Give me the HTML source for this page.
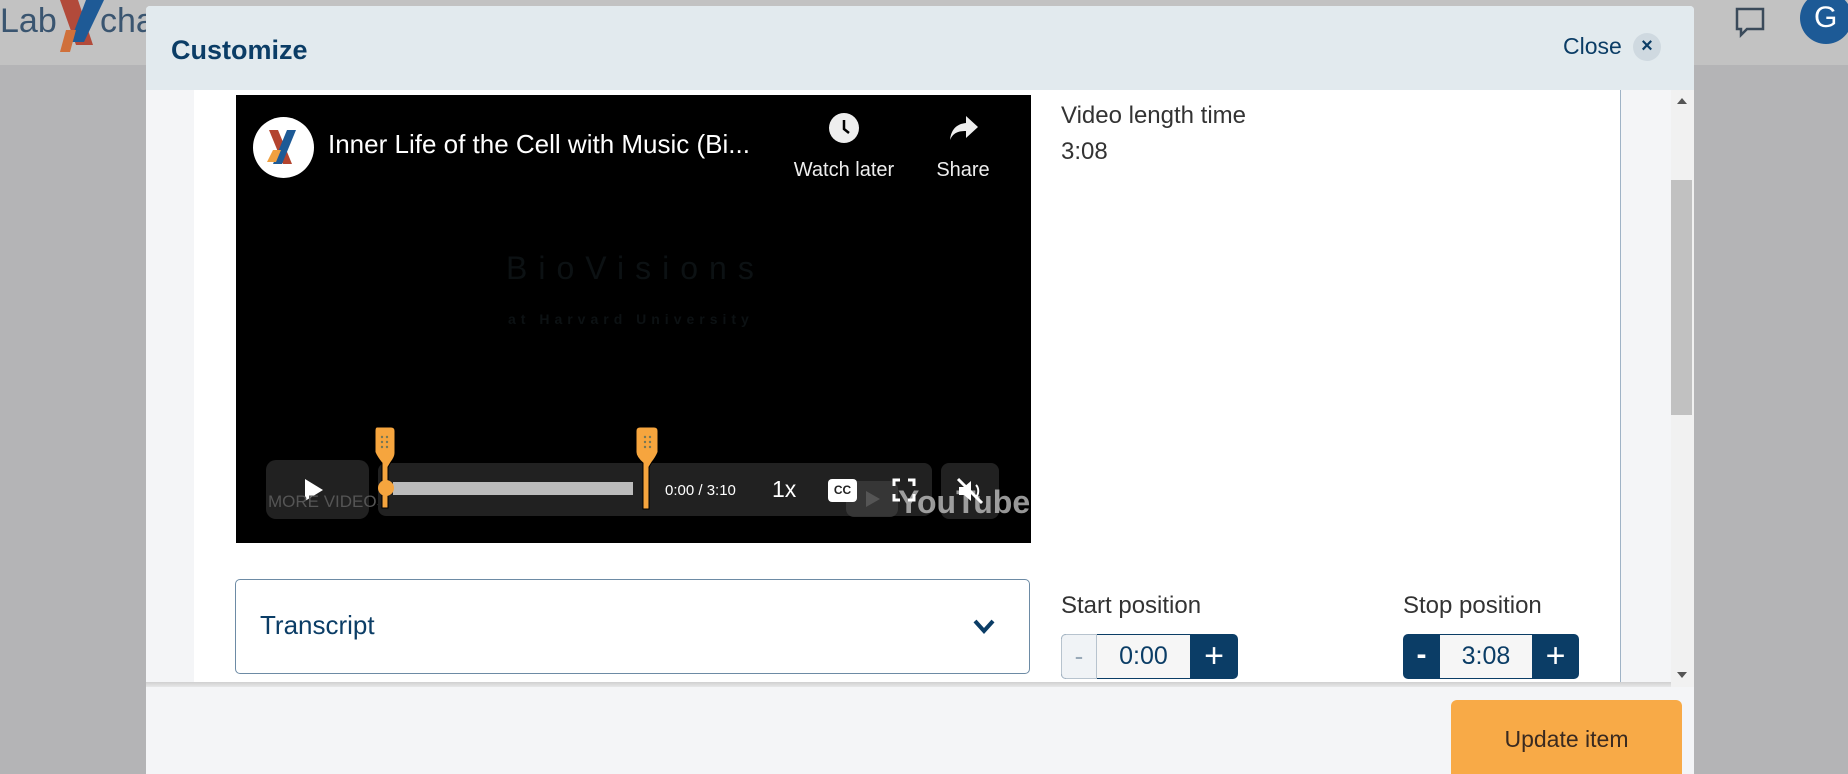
<!DOCTYPE html>
<html><head><meta charset="utf-8"><style>
*{margin:0;padding:0;box-sizing:border-box}
body{width:1848px;height:774px;overflow:hidden;background:#b4b4b6;font-family:"Liberation Sans",sans-serif;position:relative}
.a{position:absolute}
.n{font-family:"Liberation Sans Narrow","Liberation Sans",sans-serif}
</style></head><body>
<div class="a" style="left:0;top:0;width:1848px;height:65px;background:#c2c2c2"></div>
<div class="a n" style="left:0;top:2px;font-size:34px;color:#3a5570">Lab</div>
<div class="a n" style="left:100px;top:2px;font-size:34px;color:#3a5570">cha</div>
<svg class="a" style="left:48px;top:0" width="70" height="55"><path d="M12 0 L30 0 L45 45 L28 45Z" fill="#b24a3a"/><path d="M38 0 L56 0 L36 42 L22 42Z" fill="#1e5a96"/><path d="M18 30 L28 30 L22 52 L12 52Z" fill="#d0703a"/></svg>
<div class="a" style="left:1800px;top:-8px;width:52px;height:52px;border-radius:50%;background:#1d5a96;color:#fff;font-size:30px;line-height:52px;padding-left:14px">G</div>
<svg class="a" style="left:1733px;top:6px" width="34" height="34"><path d="M4 3h26v20H14l-6 6v-6H4z" fill="none" stroke="#3a4a5a" stroke-width="2.5"/></svg>

<div class="a" style="left:146px;top:6px;width:1548px;height:768px;background:#f4f5f7;border-radius:4px 4px 0 0;overflow:hidden">
 <div class="a" style="left:0;top:0;width:1548px;height:84px;background:#e2eaee"></div>
 <div class="a n" style="left:25px;top:29px;font-size:27px;font-weight:bold;color:#0b3d66">Customize</div>
 <div class="a n" style="left:1417px;top:27px;font-size:23px;color:#0b3d66">Close</div>
 <div class="a" style="left:1487px;top:27px;width:28px;height:28px;border-radius:50%;background:#cfd9e0;color:#0b3d66;font-size:20px;font-weight:bold;text-align:center;line-height:27px">×</div>
 <div class="a" style="left:48px;top:84px;width:1427px;height:597px;background:#fff;border-right:1px solid #9fb3c6"></div>
 <div class="a" style="left:1525px;top:84px;width:23px;height:597px;background:#f1f1f1"></div>
 <div class="a" style="left:1525px;top:174px;width:21px;height:235px;background:#c1c1c1"></div>
 <div class="a" style="left:1531px;top:92px;border-left:5px solid transparent;border-right:5px solid transparent;border-bottom:6px solid #555"></div>
 <div class="a" style="left:1531px;top:666px;border-left:5px solid transparent;border-right:5px solid transparent;border-top:6px solid #555"></div>
 <div class="a" style="left:0;top:676px;width:1525px;height:8px;background:linear-gradient(#d0d0d0,#f4f5f7)"></div>
 <div class="a" style="left:0;top:681px;width:1548px;height:90px;background:#f4f5f7"></div>
 <div class="a n" style="left:1305px;top:694px;width:231px;height:80px;background:#f8aa47;border-radius:6px;font-size:23px;color:#3a2a20;text-align:center;line-height:78px">Update item</div>

 <div class="a n" style="left:915px;top:92px;font-size:24px;color:#333;line-height:36px">Video length time<br>3:08</div>
 <div class="a n" style="left:915px;top:586px;font-size:24px;color:#333">Start position</div>
 <div class="a n" style="left:1257px;top:586px;font-size:24px;color:#333">Stop position</div>
 <div class="a" style="left:915px;top:628px;width:177px;height:45px;border-radius:5px;background:#0b3d66;overflow:hidden">
  <div class="a" style="left:0;top:0;width:36px;height:45px;background:#f0f3f6;border:1px solid #b7c3ce;border-radius:5px 0 0 5px;color:#98a9b8;font-size:26px;text-align:center;line-height:42px">-</div>
  <div class="a n" style="left:36px;top:1px;width:93px;height:43px;background:#f6f6f6;color:#0b3d66;font-size:25px;text-align:center;line-height:43px">0:00</div>
  <div class="a" style="left:129px;top:0;width:48px;height:45px;color:#fff;font-size:34px;text-align:center;line-height:44px">+</div>
 </div>
 <div class="a" style="left:1257px;top:628px;width:176px;height:45px;border-radius:5px;background:#0b3d66;overflow:hidden">
  <div class="a" style="left:0;top:0;width:37px;height:45px;color:#fff;font-size:30px;font-weight:bold;text-align:center;line-height:42px">-</div>
  <div class="a n" style="left:37px;top:1px;width:92px;height:43px;background:#f6f6f6;color:#0b3d66;font-size:25px;text-align:center;line-height:43px">3:08</div>
  <div class="a" style="left:129px;top:0;width:47px;height:45px;color:#fff;font-size:34px;text-align:center;line-height:44px">+</div>
 </div>

 <div class="a" style="left:89px;top:573px;width:795px;height:95px;border:1px solid #6d8ba5;border-radius:5px;background:#fff"></div>
 <div class="a n" style="left:114px;top:604px;font-size:26px;color:#0b3d66">Transcript</div>
 <svg class="a" style="left:826px;top:612px" width="24" height="18"><path d="M3 3 L12 13 L21 3" fill="none" stroke="#0b3d66" stroke-width="4"/></svg>

 <div class="a" style="left:90px;top:89px;width:795px;height:448px;background:#000;overflow:hidden">
  <div class="a" style="left:17px;top:22px;width:61px;height:61px;border-radius:50%;background:#fff"></div>
  <svg class="a" style="left:27px;top:35px" width="40" height="36"><path d="M6 0h9l14 34h-9z" fill="#b3442f"/><path d="M24 0h9L19 34h-9z" fill="#1d5a96"/><path d="M10 20h8l-5 12H4z" fill="#f0a040"/></svg>
  <div class="a n" style="left:92px;top:34px;font-size:26px;color:#fff;white-space:nowrap">Inner Life of the Cell with Music (Bi...</div>
  <div class="a" style="left:593px;top:18px;width:30px;height:30px;border-radius:50%;background:#eee"></div>
  <svg class="a" style="left:593px;top:18px" width="30" height="30"><path d="M15 7v9l5 4" fill="none" stroke="#000" stroke-width="2.5"/></svg>
  <div class="a n" style="left:550px;top:64px;width:116px;text-align:center;font-size:20px;color:#eee">Watch later</div>
  <svg class="a" style="left:712px;top:19px" width="32" height="30"><path d="M18 2 L30 13 L18 24 V17 C10 17 5 19 2 26 C3 16 8 10 18 9Z" fill="#eee"/></svg>
  <div class="a n" style="left:684px;top:64px;width:86px;text-align:center;font-size:20px;color:#eee">Share</div>
  <div class="a" style="left:270px;top:155px;font-size:32px;letter-spacing:11px;color:#0c1113">BioVisions</div>
  <div class="a" style="left:272px;top:216px;font-size:14px;letter-spacing:5px;color:#0c1113;font-weight:bold">at Harvard University</div>
  <div class="a" style="left:30px;top:365px;width:103px;height:59px;border-radius:10px;background:#212121"></div>
  <svg class="a" style="left:66px;top:382px" width="24" height="26"><path d="M3 2 L21 13 L3 24Z" fill="#fff"/></svg>
  <div class="a n" style="left:32px;top:397px;font-size:17px;color:#555;white-space:nowrap">MORE VIDEOS</div>
  <div class="a" style="left:142px;top:368px;width:554px;height:53px;border-radius:8px;background:#212121"></div>
  <div class="a" style="left:157px;top:387px;width:240px;height:13px;background:#bbb"></div>
  <div class="a" style="left:705px;top:368px;width:58px;height:56px;border-radius:8px;background:#212121"></div>
  <div class="a" style="left:610px;top:386px;width:52px;height:36px;border-radius:8px;background:rgba(60,60,60,.8)"></div>
  <svg class="a" style="left:628px;top:394px" width="18" height="20"><path d="M2 2 L16 10 L2 18Z" fill="#555"/></svg>
  <div class="a n" style="left:662px;top:389px;font-size:32px;font-weight:bold;color:rgba(200,200,200,.75);white-space:nowrap">YouTube</div>
  <svg class="a" style="left:719px;top:381px" width="30" height="30"><path d="M4 11h5l7-6v20l-7-6H4z" fill="#fff"/><path d="M3 3 L27 27" stroke="#fff" stroke-width="3"/><path d="M21 9c3 3 3 9 0 12" fill="none" stroke="#fff" stroke-width="2"/></svg>
  <div class="a" style="left:429px;top:387px;font-size:15px;color:#fff;white-space:nowrap">0:00 / 3:10</div>
  <div class="a" style="left:536px;top:381px;font-size:23px;color:#fff">1x</div>
  <div class="a" style="left:592px;top:384px;width:29px;height:23px;border-radius:4px;background:#fff;color:#222;font-size:12px;font-weight:bold;text-align:center;line-height:23px">CC</div>
  <svg class="a" style="left:656px;top:383px" width="24" height="24"><path d="M2 8V2h6M16 2h6v6M22 16v6h-6M8 22H2v-6" fill="none" stroke="#fff" stroke-width="3"/></svg>
  <svg class="a" style="left:137px;top:330px" width="30" height="90"><path d="M4 2h14q4 0 4 4v22q0 4-4 9l-3 5v41h-6V38Q4 32 2 27V6q0-4 2-4z" fill="#f6a53e" stroke="#000" stroke-width="1"/><circle cx="9" cy="12" r="1.2" fill="#775"/><circle cx="14" cy="12" r="1.2" fill="#775"/><circle cx="9" cy="17" r="1.2" fill="#775"/><circle cx="14" cy="17" r="1.2" fill="#775"/><circle cx="9" cy="22" r="1.2" fill="#775"/><circle cx="14" cy="22" r="1.2" fill="#775"/><circle cx="13" cy="63" r="8" fill="#f6a53e"/></svg>
  <svg class="a" style="left:396px;top:330px" width="30" height="90"><path d="M8 2h14q4 0 4 4v21q-2 5-6 10l-3 5v42h-6V38Q4 32 4 27V6q0-4 4-4z" fill="#f6a53e" stroke="#000" stroke-width="1"/><circle cx="13" cy="12" r="1.2" fill="#775"/><circle cx="18" cy="12" r="1.2" fill="#775"/><circle cx="13" cy="17" r="1.2" fill="#775"/><circle cx="18" cy="17" r="1.2" fill="#775"/><circle cx="13" cy="22" r="1.2" fill="#775"/><circle cx="18" cy="22" r="1.2" fill="#775"/></svg>
 </div>
</div>
</body></html>
